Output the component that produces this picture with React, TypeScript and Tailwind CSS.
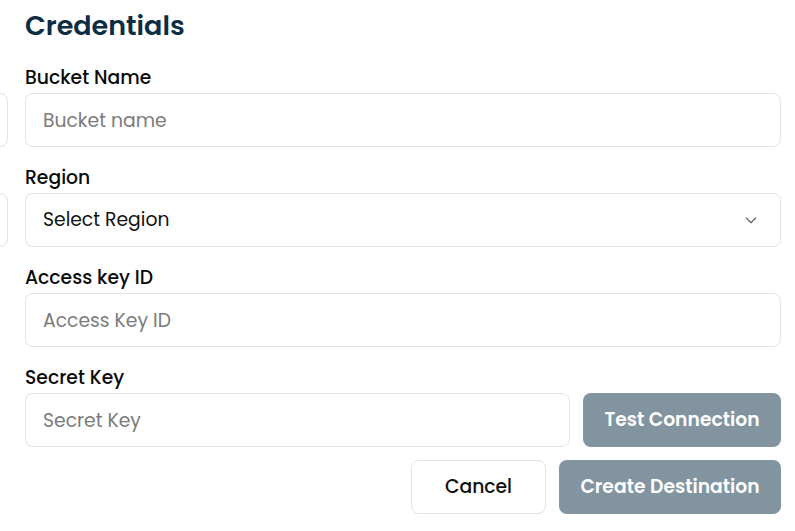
import React from "react";

const font = { fontFamily: "Poppins, Inter, 'Noto Sans', sans-serif" };

function Field({ label, children }: { label: string; children: React.ReactNode }) {
  return (
    <div className="flex flex-col">
      <label className="text-[18.75px] leading-[27px] font-[450] text-[#0a0a0a] mb-[2px]">{label}</label>
      {children}
    </div>
  );
}

function Input({ placeholder }: { placeholder: string }) {
  return (
    <input
      placeholder={placeholder}
      className="h-[54px] w-full rounded-[8px] border border-[#e3e3e3] bg-white px-[17px] text-[18.75px] text-[#111] placeholder:text-[#7b7b7b] outline-none"
      style={font}
    />
  );
}

export default function App() {
  return (
    <div className="w-[795px] h-[531px] overflow-hidden bg-white" style={font}>
      <div className="flex gap-[17px] pr-[14px]">
        <div className="w-[200px] shrink-0 ml-[-192px] flex flex-col pt-[93px] gap-[46px]">
          <div className="h-[54px] rounded-[8px] border border-[#e3e3e3]" />
          <div className="h-[54px] rounded-[8px] border border-[#e3e3e3]" />
        </div>
        <div className="flex-1 flex flex-col">
          <h2 className="text-[27px] leading-[36px] font-semibold text-[#0c2d44] mt-[8px] mb-[20px]">Credentials</h2>
          <div className="flex flex-col gap-[17px]">
            <Field label="Bucket Name">
              <Input placeholder="Bucket name" />
            </Field>
            <Field label="Region">
              <div className="h-[54px] w-full rounded-[8px] border border-[#e3e3e3] bg-white px-[17px] flex items-center justify-between">
                <span className="text-[18.75px] text-[#111]">Select Region</span>
                <svg width="16" height="16" viewBox="0 0 24 24" fill="none" stroke="#6b6b6b" strokeWidth="2" strokeLinecap="round" strokeLinejoin="round" className="mr-[4px]">
                  <path d="M5 9l7 7 7-7" />
                </svg>
              </div>
            </Field>
            <Field label="Access key ID">
              <Input placeholder="Access Key ID" />
            </Field>
            <Field label="Secret Key">
              <div className="flex gap-[13px]">
                <div className="flex-1">
                  <Input placeholder="Secret Key" />
                </div>
                <button className="h-[54px] w-[198px] rounded-[8px] bg-[#8294a0] text-white text-[18.75px] font-[560]">Test Connection</button>
              </div>
            </Field>
          </div>
          <div className="flex justify-end gap-[13px] mt-[13px]">
            <button className="h-[54px] w-[135px] rounded-[8px] border border-[#e3e3e3] bg-white text-[18.75px] font-[450] text-[#111]">Cancel</button>
            <button className="h-[54px] w-[222px] rounded-[8px] bg-[#8294a0] text-white text-[18.75px] font-[560]">Create Destination</button>
          </div>
        </div>
      </div>
    </div>
  );
}
